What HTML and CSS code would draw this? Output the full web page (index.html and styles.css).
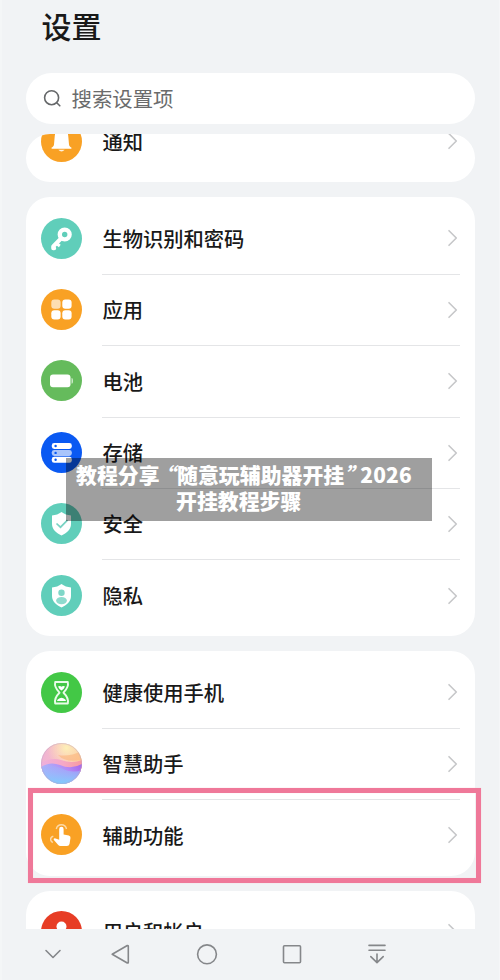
FILE: index.html
```html
<!DOCTYPE html>
<html lang="zh-CN">
<head>
<meta charset="utf-8">
<title>设置</title>
<link rel="stylesheet" href="styles.css">
</head>
<body>
<svg class="defs" width="0" height="0">
  <symbol id="chev" viewBox="0 0 12 18"><path d="M2 1.7 L9.3 9 L2 16.3" fill="none" stroke="#c6c7c9" stroke-width="1.6" stroke-linecap="round" stroke-linejoin="round"/></symbol>
</svg>
<div class="phone">
  <h1 class="title">设置</h1>
  <div class="search">
    <svg width="20" height="20" viewBox="0 0 20 20" fill="none" stroke="#66686a" stroke-width="1.6" stroke-linecap="round"><circle cx="8.600" cy="8.700" r="7"/><path d="M14 14 L16.800 16.800"/></svg>
    <span>搜索设置项</span>
  </div>
  <main class="list">
    <section class="card first">
      <div class="row">
        <svg class="icon" viewBox="0 0 41 41"><circle cx="20.5" cy="20.5" r="20.5" fill="#f9a124"/><path d="M20.500 8 C15.500 8 14 11.500 13.700 15.500 L13 23.500 C12.800 25.500 11.500 26 10.600 26.600 V27.700 H30.400 V26.600 C29.500 26 28.200 25.500 28 23.500 L27.300 15.500 C27 11.500 25.500 8 20.500 8Z" fill="#fff"/><path d="M17.300 28.800 H23.700 Q20.500 32 17.300 28.800Z" fill="#fff" opacity=".85"/></svg>
        <div class="cell"><span>通知</span><svg class="chev"><use href="#chev"/></svg></div>
      </div>
    </section>
    <section class="card">
      <div class="row">
        <svg class="icon" viewBox="0 0 41 41"><circle cx="20.5" cy="20.5" r="20.5" fill="#60ceba"/><circle cx="23.700" cy="16.500" r="4.900" fill="none" stroke="#fff" stroke-width="4.400"/><path d="M20 20.500 L12.200 28.500 V30.300 H13.200" fill="none" stroke="#fff" stroke-width="4" stroke-linejoin="round" stroke-linecap="round"/><path d="M15.500 25.500 L18.800 28" stroke="#fff" stroke-width="3"/></svg>
        <div class="cell"><span>生物识别和密码</span><svg class="chev"><use href="#chev"/></svg></div>
      </div>
      <div class="row">
        <svg class="icon" viewBox="0 0 41 41"><circle cx="20.5" cy="20.5" r="20.5" fill="#f9a124"/><g fill="#fff"><rect x="10.300" y="10.400" width="9.300" height="9.300" rx="3" opacity=".65"/><rect x="21.300" y="10.400" width="9.300" height="9.300" rx="3"/><rect x="10.300" y="21.300" width="9.300" height="9.300" rx="3"/><rect x="21.300" y="21.300" width="9.300" height="9.300" rx="3"/></g></svg>
        <div class="cell"><span>应用</span><svg class="chev"><use href="#chev"/></svg></div>
      </div>
      <div class="row">
        <svg class="icon" viewBox="0 0 41 41"><circle cx="20.5" cy="20.5" r="20.5" fill="#65bb5c"/><rect x="9" y="14.500" width="20.500" height="12.700" rx="3" fill="#fff"/><path d="M30.500 18 Q32 18 32 20 V22 Q32 23.800 30.500 23.800Z" fill="#fff" opacity=".65"/></svg>
        <div class="cell"><span>电池</span><svg class="chev"><use href="#chev"/></svg></div>
      </div>
      <div class="row">
        <svg class="icon" viewBox="0 0 41 41"><circle cx="20.5" cy="20.5" r="20.5" fill="#0a59f2"/><g fill="#fff"><rect x="10.800" y="11" width="20" height="6" rx="2.400"/><rect x="10.800" y="17.900" width="20" height="6" rx="2.400" opacity=".65"/><rect x="10.800" y="24.800" width="20" height="6" rx="2.400"/></g><g fill="#0a59f2"><circle cx="14.600" cy="14" r="1.200"/><circle cx="14.600" cy="20.900" r="1.200"/><circle cx="14.600" cy="27.800" r="1.200"/></g></svg>
        <div class="cell"><span>存储</span><svg class="chev"><use href="#chev"/></svg></div>
      </div>
      <div class="row">
        <svg class="icon" viewBox="0 0 41 41"><circle cx="20.5" cy="20.5" r="20.5" fill="#60ceba"/><path d="M20.500 9 C23 11 26.500 12.200 30 12.500 V21 C30 26.500 25.500 30 20.500 32.500 C15.500 30 11 26.500 11 21 V12.500 C14.500 12.200 18 11 20.500 9Z" fill="#fff"/><path d="M15.500 20.500 L19.500 24.200 L26.500 17.200" fill="none" stroke="#78d3c3" stroke-width="1.700"/></svg>
        <div class="cell"><span>安全</span><svg class="chev"><use href="#chev"/></svg></div>
      </div>
      <div class="row">
        <svg class="icon" viewBox="0 0 41 41"><circle cx="20.5" cy="20.5" r="20.5" fill="#60ceba"/><path d="M20.500 9 C23 11 26.500 12.200 30 12.500 V21 C30 26.500 25.500 30 20.500 32.500 C15.500 30 11 26.500 11 21 V12.500 C14.500 12.200 18 11 20.500 9Z" fill="#fff"/><circle cx="20.500" cy="17.800" r="3.200" fill="#7fd7c8"/><ellipse cx="20.500" cy="25.600" rx="5.400" ry="3.700" fill="#8edbce"/></svg>
        <div class="cell"><span>隐私</span><svg class="chev"><use href="#chev"/></svg></div>
      </div>
    </section>
    <section class="card">
      <div class="row">
        <svg class="icon" viewBox="0 0 41 41"><circle cx="20.5" cy="20.5" r="20.5" fill="#43c846"/><path d="M14.200 10 H26.800 Q28 15 22.500 20.700 Q28 26 26.800 31.500 H14.200 Q13 26 18.500 20.700 Q13 15 14.200 10Z" fill="none" stroke="#e9fbe8" stroke-width="1.900" stroke-linejoin="round"/><path d="M17 14.500 Q19 13.200 20.500 14.800 Q22 13.200 24 14.500 Q23 17 20.500 18.500 Q18 17 17 14.500Z M16 29 Q16.500 26.500 20.500 25.800 Q24.500 26.500 25 29Z" fill="#fff"/></svg>
        <div class="cell"><span>健康使用手机</span><svg class="chev"><use href="#chev"/></svg></div>
      </div>
      <div class="row">
        <svg class="icon" viewBox="0 0 41 41">
          <defs>
            <linearGradient id="sky" x1="0" y1=".2" x2="1" y2=".2"><stop offset="0" stop-color="#efb3d3"/><stop offset=".5" stop-color="#f8bec7"/><stop offset="1" stop-color="#fdd39b"/></linearGradient>
            <radialGradient id="sun" cx=".62" cy=".12" r=".48"><stop offset="0" stop-color="#fdf0b8"/><stop offset="1" stop-color="#fde3b0" stop-opacity="0"/></radialGradient>
            <linearGradient id="pinkwave" x1="0" y1="0" x2="1" y2="0"><stop offset="0" stop-color="#eeb0dd"/><stop offset=".55" stop-color="#f6a8c6"/><stop offset="1" stop-color="#f99a9f"/></linearGradient>
            <linearGradient id="violet" x1="0" y1=".3" x2="1" y2="0"><stop offset="0" stop-color="#a9b9fb"/><stop offset=".6" stop-color="#b48bf5"/><stop offset="1" stop-color="#a563ea"/></linearGradient>
            <linearGradient id="sea" x1="0" y1="0" x2="0" y2="1"><stop offset="0" stop-color="#a5acfa" stop-opacity=".5"/><stop offset="1" stop-color="#7fccfd"/></linearGradient>
            <clipPath id="orb"><circle cx="20.500" cy="20.500" r="20.500"/></clipPath>
          </defs>
          <g clip-path="url(#orb)"><path d="M0 0H41V41H0Z" fill="url(#sky)"/><path d="M0 0H41V41H0Z" fill="url(#sun)"/><path d="M17 12 Q24 20 41 17 V8 Q28 14 17 12Z" fill="#fcb47c" opacity=".6"/><path d="M0 20 Q10 14 20 17 Q31 21 41 17 V31 H0Z" fill="url(#pinkwave)"/><path d="M0 24 Q9 18 19 22 Q30 27 41 21 V41 H0Z" fill="url(#violet)"/><path d="M0 25 Q10 21 20 25 Q31 31 41 27 V41 H0Z" fill="url(#sea)"/></g><circle cx="20.500" cy="20.500" r="20" fill="none" stroke="#b9a6c6" stroke-opacity=".4"/>
        </svg>
        <div class="cell"><span>智慧助手</span><svg class="chev"><use href="#chev"/></svg></div>
      </div>
      <div class="row">
        <svg class="icon" viewBox="0 0 41 41"><circle cx="20.5" cy="20.5" r="20.5" fill="#f9a124"/><path d="M18.200 15 Q18.200 12.800 20.400 12.800 Q22.600 12.800 22.600 15 V20.500 L27.800 21.500 Q29.800 22 29.500 24 L28.500 30 Q28 32 26 32 H19.500 Q18 32 17 30.800 L12.700 25.800 Q12.300 24.500 13.800 24.300 L18.200 25.800Z" fill="#fff"/><path d="M15.300 15 A5.200 5.200 0 0 1 25.500 15 M12.300 22.200 Q9.200 23.300 9.700 26 Q10.100 27.800 11.800 28.500" fill="none" stroke="#fff" stroke-opacity=".6" stroke-width="1.400"/></svg>
        <div class="cell"><span>辅助功能</span><svg class="chev"><use href="#chev"/></svg></div>
      </div>
    </section>
    <section class="card">
      <div class="row">
        <svg class="icon" viewBox="0 0 41 41"><circle cx="20.5" cy="20.5" r="20.5" fill="#e73d25"/><circle cx="20.500" cy="15.500" r="5" fill="#fff"/><path d="M10 30 Q10 22 20.500 22 Q31 22 31 30Z" fill="#fff"/></svg>
        <div class="cell"><span>用户和帐户</span><svg class="chev"><use href="#chev"/></svg></div>
      </div>
    </section>
  </main>
  <nav class="nav">
    <svg viewBox="0 0 28 28"><path d="M7 10.500 L14 17.500 L21 10.500"/></svg>
    <svg viewBox="0 0 28 28"><path d="M5.200 14.300 L20.300 5.500 Q21.300 5.300 21.300 6.300 V22.300 Q21.300 23.300 20.300 23Z"/></svg>
    <svg viewBox="0 0 28 28"><circle cx="14" cy="14.300" r="9.400"/></svg>
    <svg viewBox="0 0 28 28"><rect x="5.500" y="5.800" width="17" height="17" rx="1"/></svg>
    <svg viewBox="0 0 28 28"><path d="M6 5.400 H22 M6 10.300 H22 M14 14 V22.600 M7.800 16.600 L14 22.600 L20.200 16.600"/></svg>
  </nav>
  <div class="highlight"></div>
  <div class="caption">
    <div class="line"><span>教程分享</span><span class="open">“</span><span>随意玩辅助器开挂</span><span class="close">”</span><span class="year">2026</span></div>
    <div class="line second">开挂教程步骤</div>
  </div>
</div>
</body>
</html>
```
FILE: styles.css
```css
* { box-sizing: border-box; }
body {
  margin: 0;
  background: #f1f3f5;
  font-family: "Noto Sans CJK SC", sans-serif;
  color: #191919;
}
.defs { position: absolute; }
.phone {
  position: relative;
  width: 500px;
  height: 980px;
  overflow: hidden;
  display: flex;
  flex-direction: column;
  border-left: 2px solid #f4f6f7;
  border-right: 1px solid #f5f6f8;
}
.title {
  margin: 0 0 0 39.5px;
  height: 73px;
  font-size: 30px;
  font-weight: 500;
  line-height: 51px;
}
.search {
  flex: none;
  width: 449px;
  height: 51px;
  margin: 0 24px 10px;
  padding-left: 17px;
  border-radius: 26px;
  background: #fff;
  display: flex;
  align-items: center;
  gap: 8.500px;
  font-size: 20.4px;
  color: #6a6b6c;
}
.search span { padding-bottom: 2px; }
.list {
  flex: none;
  width: 449px;
  height: 794.5px;
  margin: 0 24px;
  overflow: hidden;
  display: flex;
  flex-direction: column;
  gap: 15.3px;
  border-radius: 24px 24px 0 0;
}
.card {
  flex: none;
  padding: 5px 15px 5.300px;
  border-radius: 24px;
  background: #fff;
}
.first { margin-top: -33.6px; }
.row {
  display: flex;
  align-items: center;
  gap: 20px;
  height: 71.4px;
}
.icon { flex: none; width: 41px; height: 41px; }
.cell {
  flex: 1;
  height: 100%;
  display: flex;
  align-items: center;
  justify-content: space-between;
  padding-left: .4px;
  font-size: 20.3px;
  font-weight: 500;
  line-height: 30px;
}
.cell span { padding-bottom: .700px; }
.first .cell span { padding-bottom: 0; }
.row + .row .cell { border-top: 1px solid #e4e5e7; }
.row + .row .cell span { padding-bottom: 1.400px; }
.chev { width: 12px; height: 18px; margin-right: 1.300px; }
.nav {
  flex: 1;
  display: flex;
  align-items: center;
  padding-left: 37.400px;
}
.nav svg {
  width: 28px;
  height: 28px;
  margin-right: 57.300px;
  fill: none;
  stroke: #85878a;
  stroke-width: 1.600;
  stroke-linecap: round;
  stroke-linejoin: round;
}
.nav svg:first-child { margin-right: 40px; }
.highlight {
  position: absolute;
  left: 26px;
  top: 788px;
  width: 453px;
  height: 95px;
  border: 5px solid #ef7899;
  box-shadow: 0 0 1px #f7c8d5, inset 0 0 1px #f7c8d5;
}
.caption {
  position: absolute;
  left: 64px;
  top: 458px;
  width: 366px;
  height: 63px;
  padding: 3px 10px 0;
  background: rgba(0, 0, 0, .375);
  color: #fff;
  font-size: 20.900px;
  font-weight: 900;
  line-height: 26px;
  white-space: nowrap;
}
.line { display: flex; }
.open { width: 17.500px; padding-right: 2.500px; display: flex; justify-content: flex-end; font-style: italic; }
.close { width: 16px; font-style: italic; }
.year { letter-spacing: .200px; }
.second { padding-left: 100px; }
```
